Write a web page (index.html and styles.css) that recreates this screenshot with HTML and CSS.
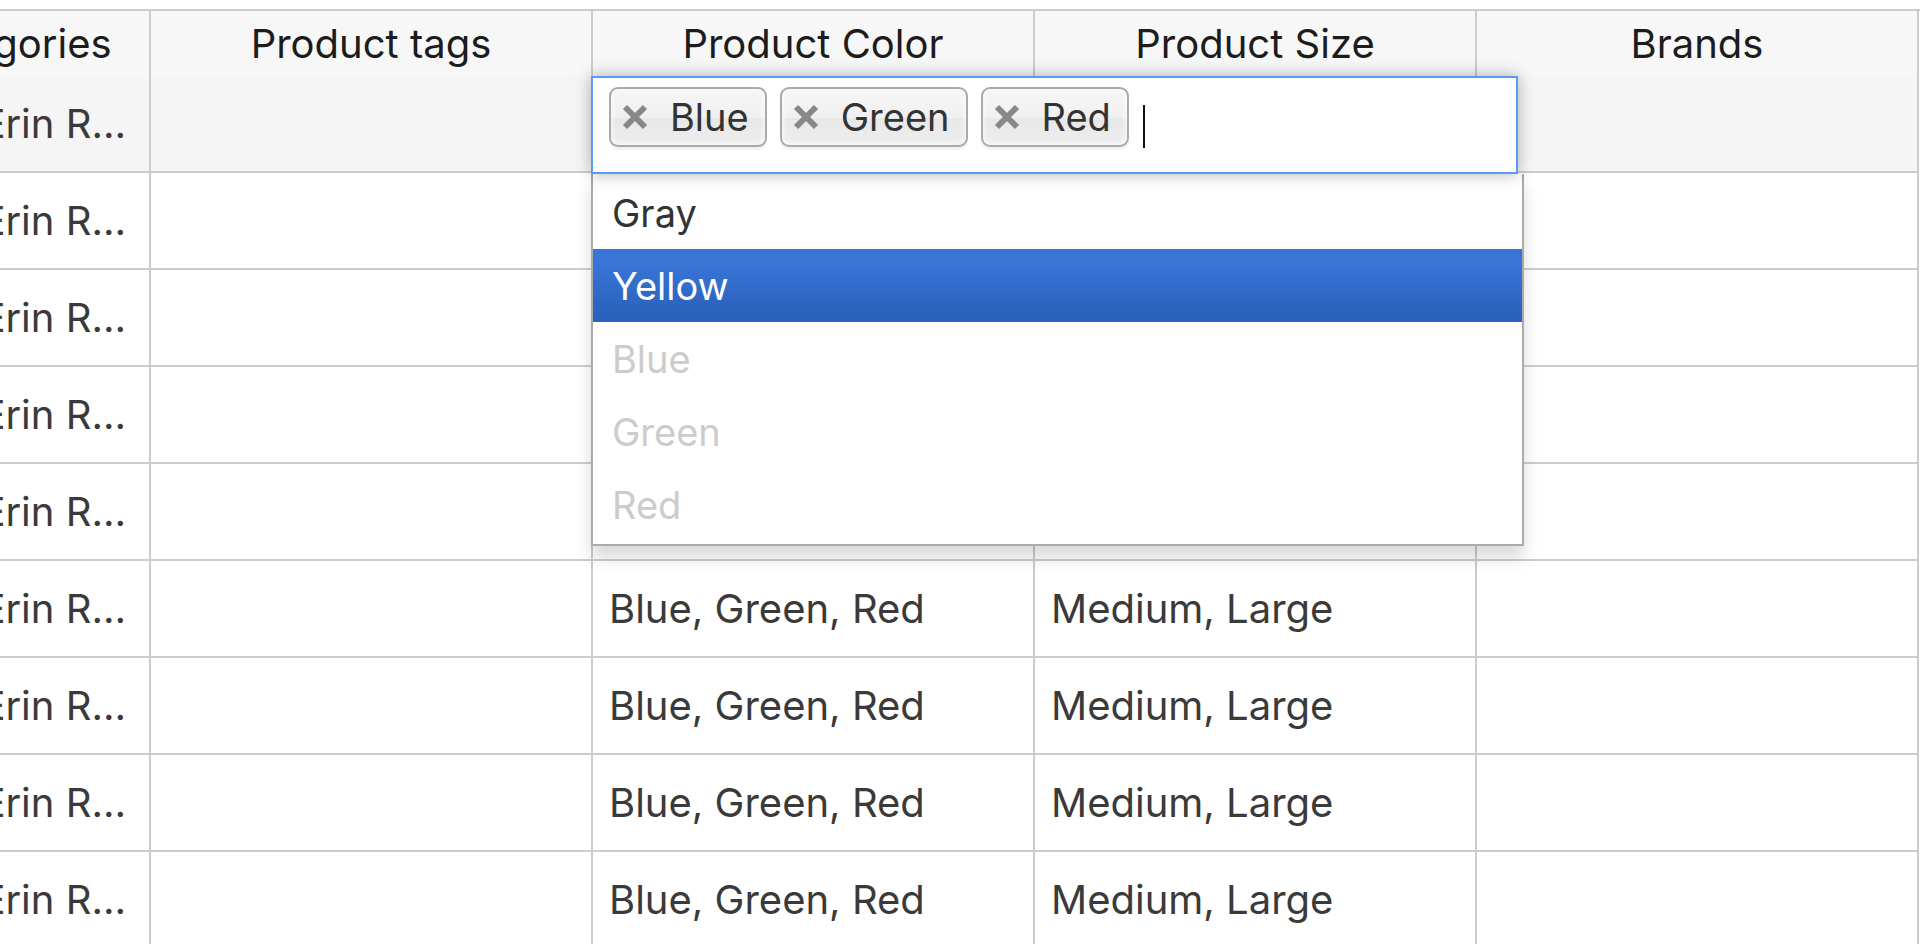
FILE: index.html
```html
<!DOCTYPE html>
<html lang="en">
  <head>
    <meta name="viewport" content="width=device-width, initial-scale=1.0" />
    <link rel="stylesheet" href="styles.css">
  </head>
  <body>
    <div class="sheet">
      <div class="grid">
        <div class="cell head">Product Categories</div>
        <div class="cell head">Product tags</div>
        <div class="cell head">Product Color</div>
        <div class="cell head">Product Size</div>
        <div class="cell head">Brands</div>

        <!-- row being edited -->
        <div class="cell first editing">Summer, Erin R…</div>
        <div class="cell editing"></div>
        <div class="cell editing"></div>
        <div class="cell editing"></div>
        <div class="cell editing"></div>

        <div class="cell first">Summer, Erin R…</div>
        <div class="cell"></div>
        <div class="cell">Blue, Green, Red</div>
        <div class="cell">Medium, Large</div>
        <div class="cell"></div>

        <div class="cell first">Summer, Erin R…</div>
        <div class="cell"></div>
        <div class="cell">Blue, Green, Red</div>
        <div class="cell">Medium, Large</div>
        <div class="cell"></div>

        <div class="cell first">Summer, Erin R…</div>
        <div class="cell"></div>
        <div class="cell">Blue, Green, Red</div>
        <div class="cell">Medium, Large</div>
        <div class="cell"></div>

        <div class="cell first">Summer, Erin R…</div>
        <div class="cell"></div>
        <div class="cell">Blue, Green, Red</div>
        <div class="cell">Medium, Large</div>
        <div class="cell"></div>

        <div class="cell first">Summer, Erin R…</div>
        <div class="cell"></div>
        <div class="cell">Blue, Green, Red</div>
        <div class="cell">Medium, Large</div>
        <div class="cell"></div>

        <div class="cell first">Summer, Erin R…</div>
        <div class="cell"></div>
        <div class="cell">Blue, Green, Red</div>
        <div class="cell">Medium, Large</div>
        <div class="cell"></div>

        <div class="cell first">Summer, Erin R…</div>
        <div class="cell"></div>
        <div class="cell">Blue, Green, Red</div>
        <div class="cell">Medium, Large</div>
        <div class="cell"></div>

        <div class="cell first">Summer, Erin R…</div>
        <div class="cell"></div>
        <div class="cell">Blue, Green, Red</div>
        <div class="cell">Medium, Large</div>
        <div class="cell"></div>
      </div>

      <!-- multi-select editor open over the Product Color cell -->
      <div class="chosen">
        <ul class="choices">
          <li class="choice">
            <svg class="remove" viewBox="0 0 26 26"><path d="M3 3 L23 23 M23 3 L3 23" /></svg>
            <span>Blue</span>
          </li>
          <li class="choice">
            <svg class="remove" viewBox="0 0 26 26"><path d="M3 3 L23 23 M23 3 L3 23" /></svg>
            <span>Green</span>
          </li>
          <li class="choice">
            <svg class="remove" viewBox="0 0 26 26"><path d="M3 3 L23 23 M23 3 L3 23" /></svg>
            <span>Red</span>
          </li>
          <li class="caret"></li>
        </ul>
        <ul class="drop">
          <li class="result">Gray</li>
          <li class="result highlighted">Yellow</li>
          <li class="result disabled">Blue</li>
          <li class="result disabled">Green</li>
          <li class="result disabled">Red</li>
        </ul>
      </div>
    </div>
  </body>
</html>
```

FILE: styles.css
```css
body {
  margin: 0;
  overflow: hidden;
  background: #fff;
  font-family: "Inter", "Liberation Sans", sans-serif;
}
ul {
  margin: 0;
  padding: 0;
  list-style: none;
}
.sheet {
  position: relative;
  padding-top: 9px;
}
.grid {
  display: grid;
  grid-template-columns: repeat(5, 442px);
  margin-left: -291px;
  border-top: 2px solid #ccc;
}
.cell {
  height: 97px;
  box-sizing: border-box;
  padding: 0 16px;
  display: flex;
  align-items: center;
  border-right: 2px solid #ccc;
  border-bottom: 2px solid #ccc;
  font-size: 40px;
  color: #3a3a3a;
  white-space: nowrap;
  overflow: hidden;
}
.cell.head {
  height: 65px;
  border-bottom: none;
  justify-content: center;
  background: #f7f7f7;
  color: #1c1c1c;
}
.cell.first {
  justify-content: flex-end;
  padding-right: 23px;
}
.cell.editing {
  background: #f5f5f5;
}

/* chosen-style editor */
.chosen {
  position: absolute;
  left: 591px;
  top: 76px;
  font-size: 38px;
}
.choices {
  position: relative;
  z-index: 2;
  width: 927px;
  height: 98px;
  box-sizing: border-box;
  padding-left: 16px;
  display: flex;
  align-items: flex-start;
  background: #fff;
  border: 2px solid #5b9af8;
  box-shadow: 0 0 15px rgba(0, 0, 0, 0.3);
}
.choice {
  height: 60px;
  box-sizing: border-box;
  margin: 9px 13px 0 0;
  padding: 0 16px 0 11px;
  display: flex;
  align-items: center;
  gap: 22px;
  border: 2px solid #aaa;
  border-radius: 9px;
  background-color: #eee;
  background-image: linear-gradient(#f4f4f4 20%, #f0f0f0 50%, #e8e8e8 52%, #eee 100%);
  background-size: 100% 57px;
  background-repeat: repeat-x;
  box-shadow: inset 0 0 6px #fff, 0 3px 0 rgba(0, 0, 0, 0.05);
  color: #333;
}
.remove {
  width: 26px;
  height: 26px;
  filter: blur(0.7px);
}
.remove path {
  stroke: #888;
  stroke-width: 6;
  fill: none;
}
.caret {
  width: 2px;
  height: 43px;
  margin: 27px 0 0 1px;
  background: #111;
}
.drop {
  width: 933px;
  box-sizing: border-box;
  padding: 2px 0 3px;
  background: #fff;
  border: 2px solid #aaa;
  border-top: none;
  box-shadow: 0 12px 15px rgba(0, 0, 0, 0.15);
}
.result {
  height: 73px;
  padding-left: 19px;
  display: flex;
  align-items: center;
  color: #333;
}
.result.highlighted {
  background-color: #3875d7;
  background-image: linear-gradient(#3875d7 20%, #2a62bc 90%);
  color: #fff;
}
.result.disabled {
  color: #ccc;
}
```
